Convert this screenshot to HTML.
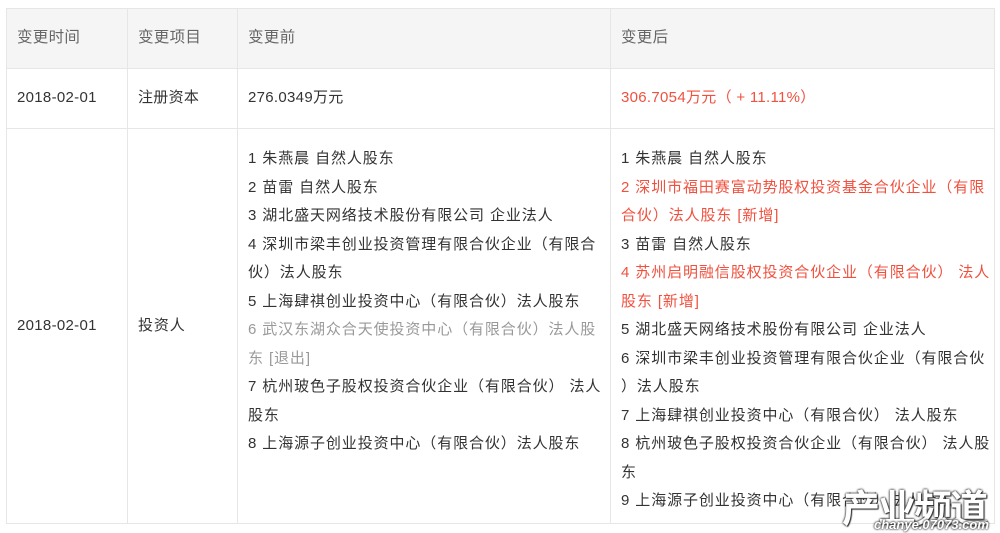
<!DOCTYPE html>
<html><head><meta charset="utf-8"><style>
body{margin:0;background:#fff;width:1000px;height:533px;overflow:hidden;font-family:"Liberation Sans","Noto Sans CJK SC",sans-serif;font-size:15px;letter-spacing:0.9px;color:#333;position:relative}
table{position:absolute;left:6px;top:8px;width:988px;border-collapse:collapse;table-layout:fixed}
td{border:1px solid #e6e6e6;padding:0 10px;vertical-align:middle;line-height:28.5px;white-space:nowrap;overflow:hidden}
tr.h td{background:#f5f5f5;color:#666;height:59px;font-size:15.5px;letter-spacing:0.3px}
tr.r2 td{height:59px;letter-spacing:0.3px}
tr.r3 td{height:378px}
.top{vertical-align:top;padding-top:16px}
.red{color:#f0513f}.gray{color:#999}
.wm{position:absolute;left:842px;top:486px;font-size:38px;font-weight:bold;color:#fff;letter-spacing:-2px;text-shadow:0 0 2px #333,0 0 2px #333,1px 1px 1px #333;font-family:"Noto Sans CJK SC",sans-serif;line-height:40px}
.wm2{position:absolute;left:874px;top:518px;font-size:13px;color:#fff;font-weight:bold;text-shadow:0 0 2px #333,0 0 2px #333;line-height:14px;font-style:italic;letter-spacing:0}
</style></head><body>
<table>
<colgroup><col style="width:121px"><col style="width:110px"><col style="width:373px"><col style="width:384px"></colgroup>
<tr class="h"><td>变更时间</td><td>变更项目</td><td>变更前</td><td>变更后</td></tr>
<tr class="r2"><td>2018-02-01</td><td>注册资本</td><td>276.0349万元</td><td class="red">306.7054万元（ + 11.11%）</td></tr>
<tr class="r3"><td style="letter-spacing:0.3px">2018-02-01</td><td>投资人</td>
<td class="top">1 朱燕晨 自然人股东<br>2 苗雷 自然人股东<br>3 湖北盛天网络技术股份有限公司 企业法人<br>4 深圳市梁丰创业投资管理有限合伙企业（有限合<br>伙）法人股东<br>5 上海肆祺创业投资中心（有限合伙）法人股东<br><span class="gray">6 武汉东湖众合天使投资中心（有限合伙）法人股<br>东 [退出]</span><br>7 杭州玻色子股权投资合伙企业（有限合伙） 法人<br>股东<br>8 上海源子创业投资中心（有限合伙）法人股东</td>
<td class="top">1 朱燕晨 自然人股东<br><span class="red">2 深圳市福田赛富动势股权投资基金合伙企业（有限<br>合伙）法人股东 [新增]</span><br>3 苗雷 自然人股东<br><span class="red">4 苏州启明融信股权投资合伙企业（有限合伙） 法人<br>股东 [新增]</span><br>5 湖北盛天网络技术股份有限公司 企业法人<br>6 深圳市梁丰创业投资管理有限合伙企业（有限合伙<br>）法人股东<br>7 上海肆祺创业投资中心（有限合伙） 法人股东<br>8 杭州玻色子股权投资合伙企业（有限合伙） 法人股<br>东<br>9 上海源子创业投资中心（有限合伙）法人股东</td></tr>
</table>
<div class="wm">产业频道</div>
<div class="wm2">chanye.07073.com</div>
</body></html>
